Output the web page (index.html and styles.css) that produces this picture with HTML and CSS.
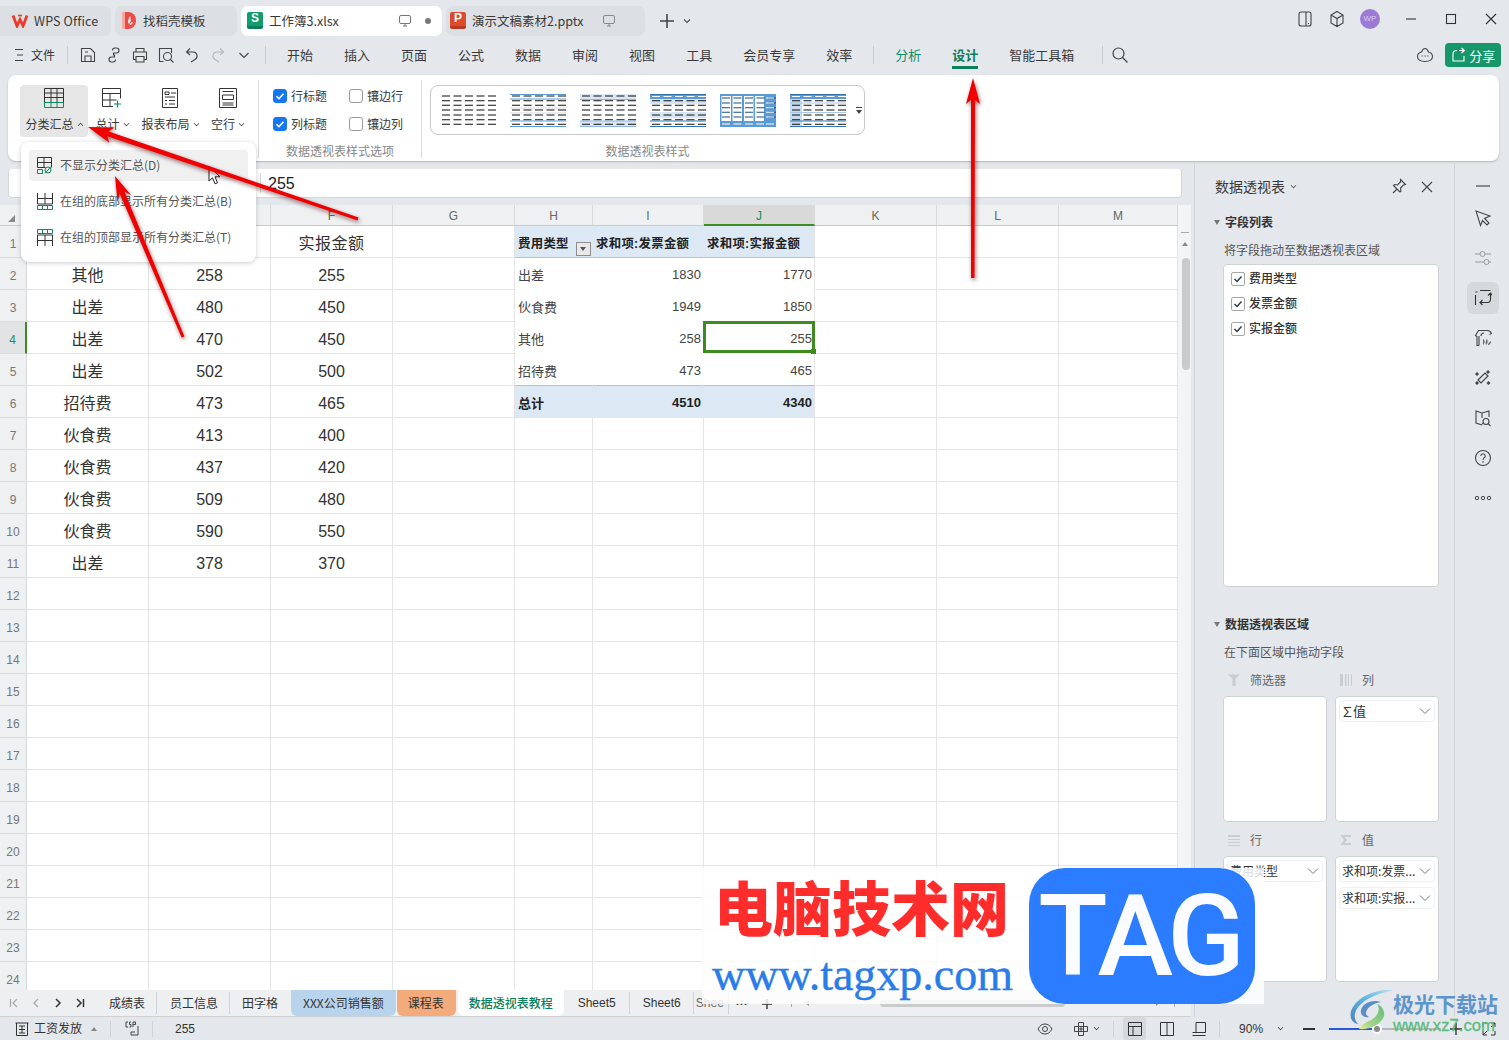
FILE: index.html
```html
<!DOCTYPE html>
<html lang="zh-CN">
<head>
<meta charset="utf-8">
<title>工作簿3.xlsx - WPS Office</title>
<link rel="stylesheet" href="styles.css">
</head>
<body>
<svg class="defs" width="0" height="0">
  <symbol id="dash" viewBox="0 0 56 33"><path d="M2 2h54M2 6.700h54M2 11.300h54M2 16h54M2 21h54M2 25.700h54M2 30.300h54" fill="none" stroke-width="1.100" stroke-dasharray="8 3.500"/></symbol>
  <linearGradient id="swirlA" x1="1" y1="0" x2="0" y2="1"><stop offset="0" stop-color="#b9dff0"/><stop offset=".5" stop-color="#58b4e0"/><stop offset="1" stop-color="#4a80bd"/></linearGradient>
  <linearGradient id="swirlB" x1="1" y1="0" x2="0" y2="1"><stop offset="0" stop-color="#5fbb78"/><stop offset=".7" stop-color="#a6d68a"/><stop offset="1" stop-color="#ece98f"/></linearGradient>
</svg>
<div class="app">
  <header class="titlebar">
    <div class="tab t1">
      <svg width="18" height="14" viewBox="0 0 18 14"><path d="M2 1.500L6 12l3-6.500L12 12l4-10.500" fill="none" stroke="#ee3a2a" stroke-width="2.800"/><path d="M7 1.500h4" stroke="#ee3a2a" stroke-width="1.600"/></svg>
      <span>WPS Office</span>
    </div>
    <div class="tab t2">
      <svg width="14" height="17" viewBox="0 0 14 17"><path d="M0 0h6a8 8 0 0 1 8 8v1a8 8 0 0 1-8 8H2l-2-1z" fill="#ec4b47"/><path d="M0 0h3v17H2l-2-1z" fill="#f6aaa2"/><path d="M7 12c-2-3 0-5 1-8 1 3 1 6-1 8zM7.500 13c1-2 2-3 3.500-3-.5 2-2 3-3.500 3z" fill="#fff"/></svg>
      <span>找稻壳模板</span>
    </div>
    <div class="tab t3 active">
      <b class="fileicon sheeticon">S</b>
      <span>工作簿3.xlsx</span>
      <svg class="mon" width="14" height="14" viewBox="0 0 14 14"><rect x="1.500" y="1.500" width="11" height="8" rx="1.500" fill="none" stroke="#777"/><path d="M5 12h4M7 10v2" stroke="#777"/></svg>
      <i class="dot"></i>
    </div>
    <div class="tab t4">
      <b class="fileicon ppticon">P</b>
      <span>演示文稿素材2.pptx</span>
      <svg class="mon" width="14" height="14" viewBox="0 0 14 14"><rect x="1.500" y="1.500" width="11" height="8" rx="1.500" fill="none" stroke="#888"/><path d="M5 12h4M7 10v2" stroke="#888"/></svg>
    </div>
    <svg class="plus" width="18" height="18" viewBox="0 0 18 18"><path d="M9 2v14M2 9h14" stroke="#444" stroke-width="1.600"/></svg>
    <svg class="tchev" width="10" height="10" viewBox="0 0 10 10"><path d="M2 3.500l3 3 3-3" fill="none" stroke="#555" stroke-width="1.200"/></svg>
    <div class="winctl">
      <svg class="w1" width="16" height="18" viewBox="0 0 16 18"><rect x="2" y="2" width="12" height="14" rx="2" fill="none" stroke="#444" stroke-width="1.100"/><path d="M9 2v14M11 13.500h1" stroke="#444" stroke-width="1.100"/></svg>
      <svg class="w2" width="16" height="18" viewBox="0 0 16 18"><path d="M8 1.500l6 3.500v8l-6 3.500L2 13V5zM2 5l6 3.500L14 5M8 8.500v8" fill="none" stroke="#444" stroke-width="1.100"/></svg>
      <b class="avatar">WP</b>
      <svg class="w3" width="12" height="12" viewBox="0 0 12 12"><path d="M1 6h10" stroke="#333" stroke-width="1.100"/></svg>
      <svg class="w4" width="12" height="12" viewBox="0 0 12 12"><rect x="1.500" y="1.500" width="9" height="9" fill="none" stroke="#333" stroke-width="1.100"/></svg>
      <svg class="w5" width="12" height="12" viewBox="0 0 12 12"><path d="M1 1l10 10M11 1L1 11" stroke="#333" stroke-width="1.100"/></svg>
    </div>
  </header>

  <nav class="menubar">
    <svg class="burger" width="10" height="14" viewBox="0 0 10 14"><path d="M1 1.500h8M3 7h6M1 12.500h8" stroke="#444" stroke-width="1.200"/></svg>
    <span class="filem">文件</span>
    <i class="msep s1"></i>
    <div class="qa">
      <svg width="16" height="18" viewBox="0 0 16 18"><path d="M1.500 2.500h9l4 4v9h-13zM5 15.500v-5.500h6v5.500M5 6h3" fill="none" stroke="#444" stroke-width="1.100"/></svg>
      <svg width="16" height="18" viewBox="0 0 16 18"><path d="M7.500 9.500V7h3a2.500 2.500 0 0 0 0-5H9A2.500 2.500 0 0 0 6.500 4.500M8.500 8.500V11h-3a2.500 2.500 0 0 0 0 5H7a2.500 2.500 0 0 0 2.500-2.500" fill="none" stroke="#444" stroke-width="1.100"/></svg>
      <svg width="16" height="18" viewBox="0 0 16 18"><path d="M4 6V2.500h8V6M4 13.500H1.500V6h13v7.500H12M4 10.500h8v5.500H4z" fill="none" stroke="#444" stroke-width="1.100"/></svg>
      <svg width="16" height="18" viewBox="0 0 16 18"><path d="M5.500 15.500h-4v-13h12V7" fill="none" stroke="#444" stroke-width="1.100"/><circle cx="9.500" cy="10.500" r="4" fill="none" stroke="#444" stroke-width="1.100"/><path d="M12.500 13.500l3 3" stroke="#444" stroke-width="1.100"/></svg>
      <svg width="16" height="18" viewBox="0 0 16 18"><path d="M6 2.500L2.500 6 6 9M2.500 6h6.500a4 4 0 0 1 2 7.500L7 16" fill="none" stroke="#444" stroke-width="1.100"/></svg>
      <svg width="16" height="18" viewBox="0 0 16 18"><path d="M10 2.500L13.500 6 10 9M13.500 6H7a4 4 0 0 0-2 7.500L9 16" fill="none" stroke="#b5b8bc" stroke-width="1.100"/></svg>
      <svg width="16" height="18" viewBox="0 0 16 18"><path d="M3.500 7l4.500 4.500L12.500 7" fill="none" stroke="#444" stroke-width="1.100"/></svg>
    </div>
    <i class="msep s2"></i>
    <div class="mitems">
      <a>开始</a><a>插入</a><a>页面</a><a>公式</a><a>数据</a><a>审阅</a><a>视图</a><a>工具</a><a>会员专享</a><a>效率</a>
      <i class="msep s3"></i>
      <a class="ctx">分析</a><a class="ctx ctx-on">设计</a><a>智能工具箱</a>
      <i class="msep s4"></i>
    </div>
    <svg class="msearch" width="18" height="18" viewBox="0 0 18 18"><circle cx="7.500" cy="7.500" r="5.500" fill="none" stroke="#444" stroke-width="1.200"/><path d="M11.500 11.500l5 5" stroke="#444" stroke-width="1.200"/></svg>
    <svg class="mcloud" width="18" height="16" viewBox="0 0 18 16"><path d="M9 1.500c2 0 3 2 3.500 3.500 2 .5 4 2 4 4.500 0 3-2.500 5-7.500 5s-7.500-2-7.500-5c0-2.500 2-4 4-4.500C6 3.500 7 1.500 9 1.500z" fill="none" stroke="#444" stroke-width="1.100"/><path d="M5.500 9h1.200M8.400 9h1.200M11.300 9h1.200" stroke="#444" stroke-width="1.200"/></svg>
    <button class="sharebtn">
      <svg width="16" height="16" viewBox="0 0 16 16"><path d="M8 3.500H13M10.500 1L13.500 3.500 10.500 6M13 9v5H2V7c0-2 1-3.500 4-3.500" fill="none" stroke="#fff" stroke-width="1.100"/></svg>
      <span>分享</span>
    </button>
  </nav>

  <section class="ribbon">
    <div class="rb rb1 hot">
      <svg width="20" height="20" viewBox="0 0 20 20"><path d="M.5.500h19v14H.5zM.5 5h19M.5 9.500h19M7 .500v14M13 .500v14" fill="none" stroke="#333"/><path d="M.5 14.500h19v5H.5zM7 14.500v5M13 14.500v5" fill="none" stroke="#0e8a5f"/></svg>
      <span>分类汇总<em class="caret up"></em></span>
    </div>
    <div class="rb rb2">
      <svg width="20" height="20" viewBox="0 0 20 20"><path d="M11 18.500H.5V.5h18v10M.5 5.500h18M.5 12h14M8 5.500v13" fill="none" stroke="#333"/><path d="M15.500 12.500v7M12 16h7" stroke="#0e8a5f" stroke-width="1.200"/></svg>
      <span>总计<em class="caret"></em></span>
    </div>
    <div class="rb rb3">
      <svg width="20" height="20" viewBox="0 0 20 20"><path d="M2.500.5h15v19h-15z" fill="none" stroke="#333"/><path d="M5 4h4v2.500H5zM11 5h5M5 9h10M5 12.500h2M9 12.500h6M5 16h2M9 16h6" fill="none" stroke="#333"/></svg>
      <span>报表布局<em class="caret"></em></span>
    </div>
    <div class="rb rb4">
      <svg width="20" height="20" viewBox="0 0 20 20"><path d="M1.500.5h17v19h-17zM4.500 3.500h11M4.500 7h11v4.500h-11zM4.500 15h11M4.500 17h11" fill="none" stroke="#333"/></svg>
      <span>空行<em class="caret"></em></span>
    </div>
    <div class="rgroup rchecks">
      <div class="chkgrid">
        <label class="chk"><i class="box box-on"><svg width="14" height="14" viewBox="0 0 14 14"><path d="M3.500 7.200l2.500 2.500 4.500-5" fill="none" stroke="#fff" stroke-width="1.600"/></svg></i>行标题</label>
        <label class="chk"><i class="box"></i>镶边行</label>
        <label class="chk"><i class="box box-on"><svg width="14" height="14" viewBox="0 0 14 14"><path d="M3.500 7.200l2.500 2.500 4.500-5" fill="none" stroke="#fff" stroke-width="1.600"/></svg></i>列标题</label>
        <label class="chk"><i class="box"></i>镶边列</label>
      </div>
      <div class="rlabel">数据透视表样式选项</div>
    </div>
    <div class="rgroup rstyles">
      <div class="gallery">
        <svg class="th" width="56" height="33" viewBox="0 0 56 33"><use href="#dash" stroke="#111"/></svg>
        <svg class="th" width="56" height="33" viewBox="0 0 56 33"><path d="M0 13h56v2H0zM0 18h56v2H0z" fill="#ececec"/><use href="#dash" stroke="#111"/><path d="M0 .5h56M0 5h56M0 27h56M0 32.500h56" stroke="#5b9bd5" fill="none"/></svg>
        <svg class="th" width="56" height="33" viewBox="0 0 56 33"><path d="M0 0h56v5H0zM0 27h56v6H0z" fill="#dbe7f4"/><use href="#dash" stroke="#111"/><path d="M0 5.500h56M0 27h56M0 32.500h56" stroke="#8fb7de" fill="none"/></svg>
        <svg class="th" width="56" height="33" viewBox="0 0 56 33"><path d="M0 0h56v5H0z" fill="#5b9bd5"/><path d="M0 5h56v5H0zM0 18h56v6H0z" fill="#d6e5f3"/><use href="#dash" stroke="#111"/><path d="M0 0h56v4.500H0z" fill="#5b9bd5"/><path d="M2 2.500h54" stroke="#fff" stroke-width="1.100" stroke-dasharray="8 3.500"/><path d="M0 .5h56M0 27h56M0 32.500h56" stroke="#2f75b5" fill="none"/></svg>
        <svg class="th" width="56" height="33" viewBox="0 0 56 33"><path d="M0 0h56v33H0z" fill="#5b9bd5"/><path d="M1.500 2h9.500v25H1.500zM12.500 2h9.500v25h-9.500zM24 2h9.500v25H24zM35 2h9v25h-9z" fill="#fff"/><path d="M2 4h54M2 9h54M2 13.700h54M2 18.300h54M2 23h54" fill="none" stroke="#1f4e79" stroke-width="1.100" stroke-dasharray="8 3.500"/><path d="M46 4h8M46 9h8M46 13.700h8M46 18.300h8M46 23h8M2 30h8M13.500 30h8M25 30h8M36 30h8M46 30h8" stroke="#fff" stroke-width="1.100"/></svg>
        <svg class="th" width="56" height="33" viewBox="0 0 56 33"><path d="M0 5h12v22H0zM0 27h12v6H0z" fill="#c9dcef"/><use href="#dash" stroke="#111"/><path d="M0 0h56v5H0z" fill="#5b9bd5"/><path d="M2 2.500h54" stroke="#fff" stroke-width="1.100" stroke-dasharray="8 3.500"/><path d="M0 .5h56M0 27h56M0 32.500h56" stroke="#2f75b5" fill="none"/><path d="M0 9h56M0 18.500h56" stroke="#a9c8e6" fill="none"/></svg>
        <svg class="gmore" width="8" height="12" viewBox="0 0 8 12"><path d="M1 2.500h6" stroke="#444"/><path d="M1 5h6L4 9z" fill="#444"/></svg>
      </div>
      <div class="rlabel">数据透视表样式</div>
    </div>
  </section>

  <div class="workspace">
    <main class="left">
      <div class="formula"><i class="fsep"></i><span class="fval">255</span></div>
      <div class="sheet">
        <table class="grid">
          <colgroup><col class="c-h"><col class="c-n"><col class="c-n"><col class="c-n"><col class="c-n"><col class="c-hh"><col class="c-i"><col class="c-j"><col class="c-n"><col class="c-n"><col class="c-m"></colgroup>
          <thead><tr><th class="corner"><i></i></th><th>D</th><th>E</th><th>F</th><th>G</th><th>H</th><th>I</th><th class="selcol">J</th><th>K</th><th>L</th><th>M</th></tr></thead>
          <tbody>
            <tr><th>1</th><td></td><td></td><td class="hd">实报金额</td><td></td><td class="p ph l"><b>费用类型</b><i class="fbtn"></i></td><td class="p ph"><b>求和项:发票金额</b></td><td class="p ph e"><b>求和项:实报金额</b></td><td></td><td></td><td></td></tr>
            <tr><th>2</th><td>其他</td><td class="n">258</td><td class="n">255</td><td></td><td class="p l">出差</td><td class="p r">1830</td><td class="p r e">1770</td><td></td><td></td><td></td></tr>
            <tr><th>3</th><td>出差</td><td class="n">480</td><td class="n">450</td><td></td><td class="p l">伙食费</td><td class="p r">1949</td><td class="p r e">1850</td><td></td><td></td><td></td></tr>
            <tr class="selrow"><th>4</th><td>出差</td><td class="n">470</td><td class="n">450</td><td></td><td class="p l">其他</td><td class="p r">258</td><td class="p r e sel">255<i class="selbox"></i></td><td></td><td></td><td></td></tr>
            <tr><th>5</th><td>出差</td><td class="n">502</td><td class="n">500</td><td></td><td class="p l pb">招待费</td><td class="p r pb">473</td><td class="p r e pb">465</td><td></td><td></td><td></td></tr>
            <tr><th>6</th><td>招待费</td><td class="n">473</td><td class="n">465</td><td></td><td class="p pt l"><b>总计</b></td><td class="p pt r"><b>4510</b></td><td class="p pt r e"><b>4340</b></td><td></td><td></td><td></td></tr>
            <tr><th>7</th><td>伙食费</td><td class="n">413</td><td class="n">400</td><td></td><td></td><td></td><td></td><td></td><td></td><td></td></tr>
            <tr><th>8</th><td>伙食费</td><td class="n">437</td><td class="n">420</td><td></td><td></td><td></td><td></td><td></td><td></td><td></td></tr>
            <tr><th>9</th><td>伙食费</td><td class="n">509</td><td class="n">480</td><td></td><td></td><td></td><td></td><td></td><td></td><td></td></tr>
            <tr><th>10</th><td>伙食费</td><td class="n">590</td><td class="n">550</td><td></td><td></td><td></td><td></td><td></td><td></td><td></td></tr>
            <tr><th>11</th><td>出差</td><td class="n">378</td><td class="n">370</td><td></td><td></td><td></td><td></td><td></td><td></td><td></td></tr>
            <tr><th>12</th><td></td><td></td><td></td><td></td><td></td><td></td><td></td><td></td><td></td><td></td></tr>
            <tr><th>13</th><td></td><td></td><td></td><td></td><td></td><td></td><td></td><td></td><td></td><td></td></tr>
            <tr><th>14</th><td></td><td></td><td></td><td></td><td></td><td></td><td></td><td></td><td></td><td></td></tr>
            <tr><th>15</th><td></td><td></td><td></td><td></td><td></td><td></td><td></td><td></td><td></td><td></td></tr>
            <tr><th>16</th><td></td><td></td><td></td><td></td><td></td><td></td><td></td><td></td><td></td><td></td></tr>
            <tr><th>17</th><td></td><td></td><td></td><td></td><td></td><td></td><td></td><td></td><td></td><td></td></tr>
            <tr><th>18</th><td></td><td></td><td></td><td></td><td></td><td></td><td></td><td></td><td></td><td></td></tr>
            <tr><th>19</th><td></td><td></td><td></td><td></td><td></td><td></td><td></td><td></td><td></td><td></td></tr>
            <tr><th>20</th><td></td><td></td><td></td><td></td><td></td><td></td><td></td><td></td><td></td><td></td></tr>
            <tr><th>21</th><td></td><td></td><td></td><td></td><td></td><td></td><td></td><td></td><td></td><td></td></tr>
            <tr><th>22</th><td></td><td></td><td></td><td></td><td></td><td></td><td></td><td></td><td></td><td></td></tr>
            <tr><th>23</th><td></td><td></td><td></td><td></td><td></td><td></td><td></td><td></td><td></td><td></td></tr>
            <tr><th>24</th><td></td><td></td><td></td><td></td><td></td><td></td><td></td><td></td><td></td><td></td></tr>
          </tbody>
        </table>
        <div class="vscroll">
          <i class="vs-dash"></i><i class="vs-up"></i><i class="vs-thumb"></i><i class="vs-down"></i>
        </div>
      </div>
      <div class="sheettabs">
        <div class="stnav">
          <svg width="10" height="10" viewBox="0 0 10 10"><path d="M1.500 1v8M8 1L4 5l4 4" fill="none" stroke="#aaa" stroke-width="1.300"/></svg>
          <svg width="10" height="10" viewBox="0 0 10 10"><path d="M7 1L3 5l4 4" fill="none" stroke="#aaa" stroke-width="1.300"/></svg>
          <svg width="10" height="10" viewBox="0 0 10 10"><path d="M3 1l4 4-4 4" fill="none" stroke="#333" stroke-width="1.500"/></svg>
          <svg width="10" height="10" viewBox="0 0 10 10"><path d="M8.500 1v8M2 1l4 4-4 4" fill="none" stroke="#333" stroke-width="1.500"/></svg>
        </div>
        <a class="st st1">成绩表</a><a class="st st2">员工信息</a><a class="st st3">田字格</a><a class="st blue">XXX公司销售额</a><a class="st orange">课程表</a><a class="st cur">数据透视表教程</a><a class="st st5">Sheet5</a><a class="st st6">Sheet6</a><a class="st st7">Shee</a>
        <span class="stmore">···</span>
        <svg class="stplus" width="12" height="12" viewBox="0 0 12 12"><path d="M6 1v10M1 6h10" stroke="#333" stroke-width="1.400"/></svg>
        <i class="hs-tick t-a"></i><i class="hs-left"></i><i class="hs-thumb"></i><i class="hs-right"></i><i class="hs-tick t-b"></i>
      </div>
    </main>

    <aside class="panel">
      <div class="phead">
        <span class="ptitle">数据透视表</span><em class="caret pcaret"></em>
        <svg class="ppin" width="16" height="16" viewBox="0 0 16 16"><path d="M9.500 1.500l5 5-2 .5-3 3 .5 3-1 1-3-3-4 4 4-4-3.500-3.500 1-1 3 .5 3-3z" fill="none" stroke="#444" stroke-width="1.100"/></svg>
        <svg class="pclose" width="12" height="12" viewBox="0 0 12 12"><path d="M1 1l10 10M11 1L1 11" stroke="#444" stroke-width="1.100"/></svg>
      </div>
      <div class="psec"><i class="tri"></i>字段列表</div>
      <div class="pdesc">将字段拖动至数据透视表区域</div>
      <div class="fieldbox">
        <label class="field"><i class="fchk"><svg width="12" height="12" viewBox="0 0 12 12"><path d="M2.500 6l2.500 2.500 4.500-5" fill="none" stroke="#2c3e50" stroke-width="1.500"/></svg></i>费用类型</label>
        <label class="field"><i class="fchk"><svg width="12" height="12" viewBox="0 0 12 12"><path d="M2.500 6l2.500 2.500 4.500-5" fill="none" stroke="#2c3e50" stroke-width="1.500"/></svg></i>发票金额</label>
        <label class="field"><i class="fchk"><svg width="12" height="12" viewBox="0 0 12 12"><path d="M2.500 6l2.500 2.500 4.500-5" fill="none" stroke="#2c3e50" stroke-width="1.500"/></svg></i>实报金额</label>
      </div>
      <div class="psec psec2"><i class="tri"></i>数据透视表区域</div>
      <div class="pdesc">在下面区域中拖动字段</div>
      <div class="areas">
        <div class="area">
          <div class="alabel"><svg width="14" height="14" viewBox="0 0 14 14"><path d="M1 1.500h12l-4.500 4V13h-3V5.500z" fill="#c9ccd0"/></svg><span class="fade">筛选器</span></div>
          <div class="abox"></div>
        </div>
        <div class="area">
          <div class="alabel"><svg width="14" height="14" viewBox="0 0 14 14"><path d="M1 1h3v12H1zM6 1h1.500v12H6zM9 1h1v12H9zM12 1h1v12h-1z" fill="#c9ccd0"/></svg><span class="fade">列</span></div>
          <div class="abox"><div class="chip chip-s"><span class="sig">∑值</span><svg width="12" height="8" viewBox="0 0 12 8"><path d="M1 1.500l5 5 5-5" fill="none" stroke="#777"/></svg></div></div>
        </div>
        <div class="area">
          <div class="alabel"><svg width="14" height="14" viewBox="0 0 14 14"><path d="M1 2h12v2H1zM1 6h12v1H1zM1 9h12v1H1zM1 12h12v1H1z" fill="#c9ccd0"/></svg><span class="fade">行</span></div>
          <div class="abox"><div class="chip">费用类型<svg width="12" height="8" viewBox="0 0 12 8"><path d="M1 1.500l5 5 5-5" fill="none" stroke="#777"/></svg></div></div>
        </div>
        <div class="area">
          <div class="alabel"><svg width="14" height="14" viewBox="0 0 14 14"><path d="M2 2h10v2H5.500L8 7l-2.500 3H12v2H2V11l3-4-3-4z" fill="#c9ccd0"/></svg><span class="fade">值</span></div>
          <div class="abox">
            <div class="chip">求和项:发票...<svg width="12" height="8" viewBox="0 0 12 8"><path d="M1 1.500l5 5 5-5" fill="none" stroke="#777"/></svg></div>
            <div class="chip">求和项:实报...<svg width="12" height="8" viewBox="0 0 12 8"><path d="M1 1.500l5 5 5-5" fill="none" stroke="#777"/></svg></div>
          </div>
        </div>
      </div>
    </aside>

    <aside class="strip">
      <div class="sb sb-min"><svg width="16" height="16" viewBox="0 0 16 16"><path d="M1 8h14" stroke="#555" stroke-width="1.300"/></svg></div>
      <div class="sb"><svg width="18" height="18" viewBox="0 0 18 18"><path d="M2 2l14 5-5.500 2.500L15 14l-2 2-4.500-4.500L6.500 16.500z" fill="none" stroke="#444" stroke-width="1.100"/></svg></div>
      <div class="sb"><svg width="18" height="18" viewBox="0 0 18 18"><path d="M1 5h5M11 5h6M1 13h9M15 13h2" stroke="#999"/><circle cx="8.500" cy="5" r="2.500" fill="none" stroke="#999"/><circle cx="12.500" cy="13" r="2.500" fill="none" stroke="#999"/></svg></div>
      <div class="sb sb-sel"><svg width="18" height="18" viewBox="0 0 18 18"><path d="M1.500 3h2M6 1.500h10.500M1.500 6v10M16.500 10V4.500M14 6.500l2.500-2.500 2 2.500M16.500 10c0 2-1 3.500-3 3.500H6M8.500 11L6 13.500 8.500 16" fill="none" stroke="#333" stroke-width="1.100"/></svg></div>
      <div class="sb"><svg width="18" height="18" viewBox="0 0 18 18"><path d="M5 16.500H3v-9l-1.500-1 3-5h9c2 0 3 1 4 3l-2 1M5 7v9.500M10 4c-1.500 0-3 .5-3 3" fill="none" stroke="#444" stroke-width="1.100"/><path d="M9 16c0-3 0-5 0-6 2 1 2 4 0 6zM12 16c-1-2 0-5 1-6 1 2 1 4-1 6zM14 16c0-1 1-3 3-4 0 2-1 4-3 4z" fill="#666"/></svg></div>
      <div class="sb"><svg width="18" height="18" viewBox="0 0 18 18"><path d="M4 11l7-7 3 3-7 7z" fill="none" stroke="#444" stroke-width="1.200"/><path d="M3 3l2 2-2 2-2-2zM14 1l2 2-2 2-2-2zM3 12l2 2-2 2-2-2zM14.500 12l2 2-2 2-2-2z" fill="#444"/></svg></div>
      <div class="sb"><svg width="18" height="18" viewBox="0 0 18 18"><path d="M8 16L2 14V2l6 2 7-2v6M8 4v5M8 15l1-.5" fill="none" stroke="#444" stroke-width="1.100"/><circle cx="12" cy="12.500" r="3" fill="none" stroke="#444" stroke-width="1.100"/><path d="M14.500 15l2 2" stroke="#444" stroke-width="1.100"/></svg></div>
      <div class="sb"><svg width="18" height="18" viewBox="0 0 18 18"><circle cx="9" cy="9" r="7.500" fill="none" stroke="#444" stroke-width="1.100"/><path d="M6.800 7a2.200 2.200 0 1 1 3.400 1.900C9.400 9.500 9 10 9 11" fill="none" stroke="#444" stroke-width="1.100"/><path d="M9 12.300v1.400" stroke="#444" stroke-width="1.200"/></svg></div>
      <div class="sb"><svg width="18" height="6" viewBox="0 0 18 6"><circle cx="3" cy="3" r="1.700" fill="none" stroke="#444"/><circle cx="9" cy="3" r="1.700" fill="none" stroke="#444"/><circle cx="15" cy="3" r="1.700" fill="none" stroke="#444"/></svg></div>
    </aside>
  </div>

  <footer class="statusbar">
    <svg class="sticon" width="14" height="14" viewBox="0 0 14 14"><path d="M.5 1h13M1.500 1v12.500h11V1M4 4h6M4 7.500h6M7 4v7M4 11h6" fill="none" stroke="#333"/></svg>
    <span class="stname">工资发放</span>
    <i class="tup"></i>
    <i class="ssep ss1"></i>
    <svg class="stmacro" width="14" height="16" viewBox="0 0 14 16"><path d="M3 1H1v5h2M6 1H4.500v2.500H6V6H4.500M8 6V1h2.500v2.500H8M13 5v9H6v-3h4" fill="none" stroke="#444"/></svg>
    <i class="ssep ss2"></i>
    <span class="stval">255</span>
    <svg class="sr eye" width="16" height="14" viewBox="0 0 16 14"><path d="M1 7c2-3.500 4-5 7-5s5 1.500 7 5c-2 3.500-4 5-7 5s-5-1.500-7-5z" fill="none" stroke="#444"/><circle cx="8" cy="7" r="2.500" fill="none" stroke="#444"/></svg>
    <svg class="sr loc" width="16" height="16" viewBox="0 0 16 16"><path d="M5.500 1.500h5v13h-5zM1.500 5.500h13v5h-13z" fill="none" stroke="#444"/><path d="M5 8h6M8 5v6" stroke="#444"/></svg>
    <em class="caret locc"></em>
    <i class="ssep ss3"></i>
    <div class="vbtn vsel"><svg width="14" height="14" viewBox="0 0 14 14"><path d="M.5.500h13v13H.5zM.5 4.500h13M5 4.500v9" fill="none" stroke="#333"/></svg></div>
    <div class="vbtn"><svg width="14" height="14" viewBox="0 0 14 14"><path d="M.5.500h13v13H.5zM7 .5v13" fill="none" stroke="#333"/></svg></div>
    <div class="vbtn"><svg width="14" height="14" viewBox="0 0 14 14"><path d="M.5 10.500h13V.5H4v10M.5 13.500h13" fill="none" stroke="#333"/></svg></div>
    <i class="ssep ss4"></i>
    <span class="zoomv">90%</span>
    <em class="caret zoomc"></em>
    <i class="zminus"></i>
    <div class="zslider"><i class="zfill"></i><i class="zknob"></i></div>
    <svg class="zplus" width="12" height="12" viewBox="0 0 12 12"><path d="M6 0v12M0 6h12" stroke="#333" stroke-width="1.400"/></svg>
    <svg class="zfull" width="14" height="14" viewBox="0 0 14 14"><path d="M5 1H1v4M9 1h4v4M5 13H1V9M9 13h4V9M1 13l4-4M13 1L9 5" fill="none" stroke="#333"/></svg>
  </footer>
</div>

<div class="dropdown">
  <div class="ditem hi">
    <svg width="16" height="17" viewBox="0 0 16 17"><path d="M.5.500h14v10M.5.500v10h8M.5 5.500h14M7 .5v10" fill="none" stroke="#333"/><path d="M.5 12.500h5v4h-5z" fill="none" stroke="#0e8a5f"/><circle cx="11" cy="13" r="3" fill="none" stroke="#0e8a5f"/><path d="M8 16.500l6-7" stroke="#0e8a5f"/></svg>
    <span>不显示分类汇总(D)</span>
  </div>
  <div class="ditem">
    <svg width="16" height="17" viewBox="0 0 16 17"><path d="M.5 0v11h15V0M.5 5.500h15M8 0v11" fill="none" stroke="#333"/><path d="M.5 12.500h15v4H.5zM5.500 12.500v4M10.500 12.500v4" fill="none" stroke="#0e8a5f"/></svg>
    <span>在组的底部显示所有分类汇总(B)</span>
  </div>
  <div class="ditem">
    <svg width="16" height="17" viewBox="0 0 16 17"><path d="M.5.500h15v4H.5zM5.500.5v4M10.500.5v4" fill="none" stroke="#0e8a5f"/><path d="M.5 17V6h15v11M.5 11.500h15M8 6v11" fill="none" stroke="#333"/></svg>
    <span>在组的顶部显示所有分类汇总(T)</span>
  </div>
</div>

<svg class="cursor" width="14" height="20" viewBox="0 0 14 20"><path d="M1 1v15l3.500-3.200 2.500 6 2.500-1-2.500-6H12z" fill="#fff" stroke="#222"/></svg>

<svg class="arrows" width="1509" height="1040" viewBox="0 0 1509 1040">
  <path d="M88 127L114.600 127.600 108.700 131.400 358.500 217.600 357.500 220.400 107.100 136.200 109.400 142.800z"/>
  <path d="M115 176L131.200 195.200 124.300 191.600 184.400 336.400 181.600 337.600 119.700 193.600 117.400 201z"/>
  <path d="M973 78L980 104 975 100 974.500 278 971 278 971 100 966 104z"/>
</svg>

<div class="wm">
  <div class="wm-left">
    <div class="wm-cn">电脑技术网</div>
    <div class="wm-url">www.tagxp.com</div>
  </div>
  <div class="wm-tag">TAG</div>
</div>

<div class="wm2">
  <svg class="wm2-logo" width="44" height="40" viewBox="0 0 44 40">
    <path d="M44 0C28-1 10 5 3 17c-5 8-2 16 5 17C3 29 4 22 9 16 16 8 29 3 44 0z" fill="url(#swirlA)"/>
    <path d="M31 12c-9-3-18 1-20 8-1 5 3 8 8 7-3-2-4-4-2-7 2-4 8-7 14-8z" fill="#5a8fc4"/>
    <path d="M27 14c4 5 1 13-8 17-4 2-8 4-10 8 10 1 22-4 25-13 1-5-2-10-7-12z" fill="url(#swirlB)"/>
  </svg>
  <div class="wm2-text">
    <div class="wm2-cn">极光下载站</div>
    <div class="wm2-url">www.xz7.com</div>
  </div>
</div>
</body>
</html>
```

FILE: styles.css
```css
* { box-sizing: border-box; }
html, body { margin: 0; padding: 0; }
body {
  width: 1509px; height: 1040px; overflow: hidden; position: relative;
  background: #e4e7ec; color: #333;
  font: 12px/1.2 "Noto Sans CJK SC", "Liberation Sans", sans-serif;
}
i, em { font-style: normal; display: block; }
a { display: block; }
.defs { position: absolute; }
.app { width: 1509px; height: 1040px; display: flex; flex-direction: column; }

/* title bar */
.titlebar { height: 40px; flex: none; padding-top: 6px; display: flex; align-items: flex-start; }
.tab { height: 30px; background: #dcdfe3; border-radius: 7px; display: flex; align-items: center; margin-right: 4px; position: relative; font-size: 12.5px; color: #3a3a3a; padding-bottom: 1px; }
.t1 { width: 111px; padding-left: 11px; gap: 5px; border-radius: 0 7px 7px 0; letter-spacing: .15px; }
.t2 { width: 122px; padding-left: 7px; gap: 7px; }
.t3 { width: 201px; padding-left: 6px; gap: 6px; }
.t4 { width: 199px; padding-left: 4px; gap: 6px; }
.active { background: #fff; }
.fileicon { width: 16px; height: 17px; border-radius: 2px; color: #fff; display: flex; align-items: center; justify-content: center; font: bold 12px "Liberation Sans", sans-serif; padding-bottom: 2px; }
.sheeticon { background: #0f9d6f; border-bottom: 3px solid #0c7f5a; }
.ppticon { background: #de4a2c; border-bottom: 3px solid #b93b22; }
.mon { position: absolute; top: 8px; }
.t3 .mon { left: 157px; }
.t4 .mon { left: 156px; }
.dot { position: absolute; left: 184px; top: 12px; width: 6px; height: 6px; border-radius: 50%; background: #777; }
.plus { margin: 6px 0 0 9px; }
.tchev { margin: 10px 0 0 6px; }
.winctl { margin-left: auto; height: 28px; display: flex; align-items: center; position: relative; width: 219px; }
.winctl > * { position: absolute; }
.w1 { left: 7px; top: 4px; } .w2 { left: 39px; top: 4px; }
.avatar { left: 70px; top: 3px; width: 20px; height: 20px; border-radius: 50%; background: #9a7ad2; color: #d8c8f2; font: 8px/20px "Liberation Sans", sans-serif; text-align: center; }
.w3 { left: 115px; top: 7px; } .w4 { left: 155px; top: 7px; } .w5 { left: 195px; top: 7px; }

/* menu bar */
.menubar { height: 35px; flex: none; padding-bottom: 5px; display: flex; align-items: center; position: relative; }
.burger { margin-left: 14px; flex: none; }
.filem { margin-left: 7px; font-size: 12px; white-space: nowrap; flex: none; }
.msep { width: 1px; height: 18px; background: #c9ccd0; flex: none; }
.s1 { margin-left: 12px; }
.qa { display: flex; margin-left: 12px; gap: 10px; flex: none; }
.s2 { margin-left: 13px; }
.mitems { display: flex; align-items: center; gap: 31px; margin-left: 21px; font-size: 13px; color: #3a3a3a; flex: none; }
.mitems a { white-space: nowrap; }
.s3 { margin: 0 -10px; }
.s4 { margin-left: -3px; }
.ctx { color: #0f8f68; position: relative; }
.ctx-on { font-weight: 700; color: #0b7f5b; }
.ctx-on::after { content: ""; position: absolute; left: 0; right: 0; bottom: -6px; height: 3px; background: #0b7f5b; }
.msearch { margin-left: 8px; flex: none; }
.mcloud { margin-left: 287px; flex: none; }
.sharebtn { margin-left: 11px; width: 56px; height: 24px; flex: none; border: 0; border-radius: 4px; background: #15976a; color: #fff; display: flex; align-items: center; justify-content: center; gap: 2px; padding: 0; font: 13px "Noto Sans CJK SC", sans-serif; }

/* ribbon */
.ribbon { height: 86px; flex: none; margin: 0 10px 0 8px; background: #fff; border-radius: 8px; box-shadow: 0 1px 2px rgba(0,0,0,.22); display: flex; align-items: flex-start; padding-left: 12px; position: relative; }
.rb { height: 52px; margin-top: 10px; display: flex; flex-direction: column; align-items: center; padding-top: 3px; border-radius: 4px; flex: none; white-space: nowrap; }
.rb span { display: flex; align-items: center; gap: 2px; margin-top: 7px; line-height: 18px; color: #3a3a3a; }
.rb1 { width: 68px; }
.hot { background: #e6e6e6; }
.rb2 { width: 34px; margin-left: 7px; }
.rb3 { width: 58px; margin-left: 12px; }
.rb4 { width: 33px; margin-left: 12px; }
.caret { width: 5px; height: 5px; border-right: 1.2px solid #444; border-bottom: 1.2px solid #444; transform: rotate(45deg) scale(.8); margin: -2px 0 0 2px; flex: none; }
.caret.up { transform: rotate(225deg) scale(.8); margin-top: 2px; }
.rgroup { height: 78px; margin-top: 5px; border-left: 1px solid #dcdcdc; flex: none; }
.rchecks { width: 163px; margin-left: 14px; padding: 6px 0 0 14px; }
.chkgrid { display: grid; grid-template-columns: 76px 60px; grid-auto-rows: 20px; row-gap: 8px; }
.chk { display: flex; align-items: center; gap: 4px; color: #3a3a3a; white-space: nowrap; }
.box { width: 14px; height: 14px; border: 1px solid #9a9a9a; border-radius: 3px; background: #fff; flex: none; }
.box-on { background: #1677f2; border-color: #1677f2; }
.box svg { display: block; margin: -1px; }
.rlabel { margin-top: 9px; height: 14px; line-height: 14px; text-align: center; color: #888; white-space: nowrap; }
.rchecks .rlabel { margin-left: -14px; margin-top: 10px; }
.rstyles { border-left: 1px solid #dcdcdc; padding: 5px 0 0 8px; width: 444px; }
.gallery { width: 435px; height: 50px; border: 1px solid #c9c9c9; border-radius: 8px; padding: 8px 0 0 9px; display: flex; align-items: flex-start; gap: 14px; }
.th { flex: none; display: block; }
.gmore { margin: 11px 0 0 -5px; flex: none; }

/* workspace */
.workspace { flex: 1; min-height: 0; display: flex; }
.left { width: 1194px; flex: none; padding-top: 7px; display: flex; flex-direction: column; }
.formula { height: 30px; width: 1174px; margin: 0 0 7px 8px; flex: none; background: #fff; border-radius: 4px; border: 1px solid #d4d6da; border-top-color: #e8e8e8; display: flex; align-items: center; padding-left: 251px; position: relative; }
.fsep { width: 1px; height: 20px; background: #d8d8d8; }
.fval { margin: 2px 0 0 7px; font: 16px "Liberation Sans", sans-serif; color: #222; }
.sheet { height: 785px; flex: none; display: flex; overflow: hidden; }
.grid { width: 1178px; flex: none; table-layout: fixed; border-collapse: separate; border-spacing: 0; background: #fff; align-self: flex-start; }
.c-h { width: 27px; } .c-n { width: 122px; } .c-hh { width: 78px; } .c-i { width: 111px; } .c-j { width: 111px; } .c-m { width: 119px; }
.grid thead th { height: 21px; background: #eef0f1; border-right: 1px solid #d8d9da; border-bottom: 1px solid #c9cacb; font: 400 12px "Liberation Sans", sans-serif; color: #666; padding: 2px 0 0; }
.grid tbody th { background: #eef0f1; border-right: 1px solid #d8d9da; border-bottom: 1px solid #dcdcdc; font: 400 12px "Liberation Sans", sans-serif; color: #777; padding: 4px 0 0; }
.grid tbody tr { height: 32px; }
.grid td { height: 32px; padding: 0; border-right: 1px solid #e5e5e5; border-bottom: 1px solid #e5e5e5; text-align: center; font: 16px "Liberation Sans", "Noto Sans CJK SC", sans-serif; color: #333; white-space: nowrap; overflow: hidden; }
.grid td.n { padding-top: 4px; }
.hd { letter-spacing: .5px; }
.corner i { width: 0; height: 0; margin: 4px 0 0 8px; border-left: 7px solid transparent; border-bottom: 7px solid #888; }
.grid thead .selcol { background: #d9d9d9; color: #1f8a5f; border-bottom: 2px solid #3f8c1e; }
.grid tbody .selrow th { color: #1f8a5f; border-right: 2px solid #3f8c1e; background: #e2e3e4; }
.grid td.p { font-size: 13px; border-right-color: transparent; border-bottom-color: transparent; text-align: left; padding: 2px 2px 0 3px; overflow: visible; color: #444; }
.grid td.r { text-align: right; }
.grid td.e { border-right-color: #e5e5e5; }
.grid td.ph { background: #dce9f5; border-bottom: 1px solid #a9c4e6; font-size: 12.4px; letter-spacing: .3px; position: relative; padding-top: 3px; }
.grid td.ph b, .grid td.pt b { font-weight: 700; color: #222; }
.grid td.pb { border-bottom: 1px solid #a9c4e6; }
.grid td.pt { background: #dce9f5; }
.fbtn { position: absolute; right: 1px; bottom: 1px; width: 15px; height: 14px; border: 1px solid #8d8d8d; background: #e8e8e8; }
.fbtn::after { content: ""; position: absolute; left: 3px; top: 4px; border-left: 3.500px solid transparent; border-right: 3.500px solid transparent; border-top: 4px solid #555; }
.grid td.sel { position: relative; }
.selbox { position: absolute; inset: -1px -1px 0 -1px; border: 3px solid #3f8c1e; pointer-events: none; }
.selbox::after { content: ""; position: absolute; right: -4px; bottom: -4px; width: 5px; height: 5px; background: #3f8c1e; }
.vscroll { width: 13px; flex: none; background: #f3f4f5; position: relative; }
.vs-dash { position: absolute; left: 3px; top: 27px; width: 8px; height: 1px; background: #aaa; }
.vs-up { position: absolute; left: 4px; top: 37px; border-left: 3px solid transparent; border-right: 3px solid transparent; border-bottom: 4px solid #888; }
.vs-thumb { position: absolute; left: 4px; top: 53px; width: 8px; height: 112px; border-radius: 4px; background: #c8cacc; }
.vs-down { position: absolute; left: 4px; top: 771px; border-left: 3px solid transparent; border-right: 3px solid transparent; border-top: 4px solid #888; }

/* sheet tabs */
.sheettabs { height: 27px; flex: none; width: 1191px; background: #edeff1; display: flex; align-items: stretch; position: relative; white-space: nowrap; border-bottom: 1px solid #cfd1d4; }
.stnav { width: 97px; flex: none; display: flex; align-items: center; gap: 12px; padding-left: 9px; }
.st { padding: 0 11px 0 12px; line-height: 26px; border-right: 1px solid transparent; position: relative; color: #333; font-size: 12px; flex: none; }
.st1, .st2, .st5, .st6 { border-right-color: #d0d2d5; height: 22px; line-height: 22px; margin-top: 2px; }
.st2 { padding-left: 13px; }
.st3 { padding-left: 12px; padding-right: 12px; }
.blue { background: #b8d4ec; border-radius: 0 0 6px 6px; padding: 0 11px 0 12px; }
.orange { background: #f4ab7c; border-radius: 0 0 6px 6px; margin-left: 1px; padding: 0 11px; width: 59px; }
.cur { background: #fff; color: #0b7f5b; border-radius: 0 0 6px 6px; margin-left: 2px; width: 106px; font-weight: 500; padding: 0 11px; }
.st5, .st6 { font-family: "Liberation Sans", sans-serif; padding: 0 13px 0 14px; }
.st6 { padding-left: 13px; padding-right: 12px; }
.st7 { font-family: "Liberation Sans", sans-serif; width: 35px; padding: 0 0 0 2px; border-right: 1px solid #d0d2d5; height: 22px; line-height: 22px; margin-top: 2px; color: #666; }
.stmore { margin-left: 5px; width: 16px; text-align: center; font: 700 12px/28px "Liberation Sans", sans-serif; color: #444; flex: none; }
.stplus { margin: 8px 0 0 11px; flex: none; }
.hs-tick { position: absolute; top: 10px; width: 1px; height: 7px; background: #aaa; }
.t-a { left: 791px; } .t-b { left: 1174px; }
.hs-left { position: absolute; left: 805px; top: 10px; border-top: 3px solid transparent; border-bottom: 3px solid transparent; border-right: 4px solid #999; }
.hs-right { position: absolute; left: 1156px; top: 10px; border-top: 3px solid transparent; border-bottom: 3px solid transparent; border-left: 4px solid #999; }
.hs-thumb { position: absolute; left: 880px; top: 10px; width: 185px; height: 7px; border-radius: 4px; background: #c8cacc; }

/* panel */
.panel { width: 261px; flex: none; border-left: 1px solid #cfd2d6; border-right: 1px solid #cfd2d6; padding-left: 28px; position: relative; }
.phead { height: 52px; margin-left: -8px; padding-bottom: 2px; display: flex; align-items: center; font-size: 14px; position: relative; }
.ptitle { color: #3a3a3a; }
.pcaret { margin-left: 6px; }
.ppin { position: absolute; left: 176px; top: 17px; }
.pclose { position: absolute; left: 206px; top: 20px; }
.psec { height: 18px; line-height: 18px; font-weight: 700; margin-left: 2px; position: relative; color: #333; }
.psec2 { margin-top: 28px; }
.tri { position: absolute; left: -11px; top: 7px; border-left: 3px solid transparent; border-right: 3px solid transparent; border-top: 5px solid #777; }
.pdesc { margin: 10px 0 0 1px; height: 18px; line-height: 18px; color: #555; }
.fieldbox { width: 216px; height: 323px; margin-top: 5px; background: #fff; border: 1px solid #cfd2d6; border-radius: 4px; padding: 1px 0 0 7px; }
.field { height: 25px; display: flex; align-items: center; gap: 4px; font-weight: 500; color: #333; }
.fchk { width: 14px; height: 14px; border: 1px solid #a8a8a8; border-radius: 2px; background: #fff; }
.fchk svg { display: block; margin: 0; }
.areas { margin-top: 9px; display: grid; grid-template-columns: 104px 104px; gap: 8px; }
.area { display: flex; flex-direction: column; gap: 6px; }
.alabel { height: 20px; display: flex; align-items: center; gap: 9px; padding-left: 4px; }
.fade { color: #666; }
.abox { height: 126px; background: #fff; border: 1px solid #cfd2d6; border-radius: 4px; padding: 3px; display: flex; flex-direction: column; gap: 5px; }
.chip { height: 22px; border: 1px solid #eff0f3; border-radius: 4px; display: flex; align-items: center; justify-content: space-between; padding: 0 3px 0 2px; color: #333; white-space: nowrap; }
.chip-s { font-size: 13px; padding-left: 1px; }
.sig { letter-spacing: -1px; }

/* strip */
.strip { flex: 1; padding: 9px 0 0 1px; display: flex; flex-direction: column; align-items: center; }
.sb { width: 32px; height: 32px; margin-top: 8px; flex: none; border-radius: 6px; display: flex; align-items: center; justify-content: center; }
.sb-min { margin: 0 0 -8px; }
.sb-sel { background: #d5d8dd; }

/* status bar */
.statusbar { height: 23px; flex: none; display: flex; align-items: center; position: relative; background: #e4e7ec; }
.sticon { margin-left: 15px; }
.stname { margin-left: 5px; color: #333; }
.tup { margin-left: 9px; border-left: 3px solid transparent; border-right: 3px solid transparent; border-bottom: 4px solid #888; }
.ssep { width: 1px; height: 16px; background: #cfd2d6; flex: none; }
.ss1 { margin-left: 13px; }
.stmacro { margin-left: 14px; }
.ss2 { margin-left: 13px; }
.stval { margin-left: 22px; font: 12px "Liberation Sans", sans-serif; }
.eye { margin-left: 842px; }
.loc { margin-left: 20px; }
.locc { margin-left: 5px; }
.ss3 { margin-left: 14px; }
.vbtn { width: 23px; height: 23px; flex: none; display: flex; align-items: center; justify-content: center; margin-left: 9px; }
.vsel { background: #d5d8dd; border-radius: 3px; }
.ss4 { margin-left: 9px; }
.zoomv { margin-left: 19px; font: 12px "Liberation Sans", sans-serif; }
.zoomc { margin-left: 15px; }
.zminus { margin-left: 20px; width: 12px; height: 2px; background: #333; }
.zslider { margin-left: 14px; width: 112px; height: 2px; background: #b5b7ba; position: relative; }
.zfill { width: 46px; height: 2px; background: #2a57d8; }
.zknob { position: absolute; left: 43px; top: -4px; width: 10px; height: 10px; border-radius: 50%; background: #8a8a8a; border: 2px solid #fff; }
.zplus { margin-left: 9px; }
.zfull { margin-left: 20px; }

/* overlays */
.dropdown { position: absolute; left: 21px; top: 142px; width: 235px; height: 120px; background: #fff; border-radius: 8px; box-shadow: 0 1px 5px rgba(0,0,0,.2); padding: 8px; display: flex; flex-direction: column; gap: 5px; z-index: 5; }
.ditem { height: 31px; border-radius: 4px; display: flex; align-items: center; gap: 7px; padding-left: 8px; color: #555; white-space: nowrap; }
.ditem.hi { background: #f0f0f0; }
.cursor { position: absolute; left: 208px; top: 165px; z-index: 6; }
.arrows { position: absolute; left: 0; top: 0; z-index: 7; pointer-events: none; fill: #f00000; filter: drop-shadow(1px 2px 2px rgba(60,0,0,.55)); }
.wm { position: absolute; left: 702px; top: 868px; width: 562px; height: 136px; background: rgba(255,255,255,.82); z-index: 8; display: flex; }
.wm-left { width: 327px; padding-left: 12px; }
.wm-cn { height: 70px; margin-top: 3px; font: 900 59px/70px "Noto Sans CJK SC", sans-serif; color: #ff2c2c; white-space: nowrap; }
.wm-url { margin: 10px 0 0 -2px; font: 46px/48px "Liberation Serif", serif; color: #2a7de8; white-space: nowrap; -webkit-text-stroke: .4px #2a7de8; }
.wm-tag { width: 226px; height: 136px; background: #2b7cff; border-radius: 36px; color: #fbfcff; font: 500 114px/136px Roboto, "Liberation Sans", sans-serif; letter-spacing: -5px; text-align: center; padding-right: 6px; }
.wm2 { position: absolute; left: 1350px; top: 990px; width: 155px; height: 46px; z-index: 8; display: flex; }
.wm2-logo { flex: none; }
.wm2-text { margin-left: -1px; }
.wm2-cn { font: 700 21px/26px "Noto Sans CJK SC", sans-serif; color: #5c95cc; white-space: nowrap; }
.wm2-url { margin-top: 1px; font: 16.7px/18px "Liberation Sans", sans-serif; color: #5bbb7a; white-space: nowrap; -webkit-text-stroke: .3px #5bbb7a; }
```
